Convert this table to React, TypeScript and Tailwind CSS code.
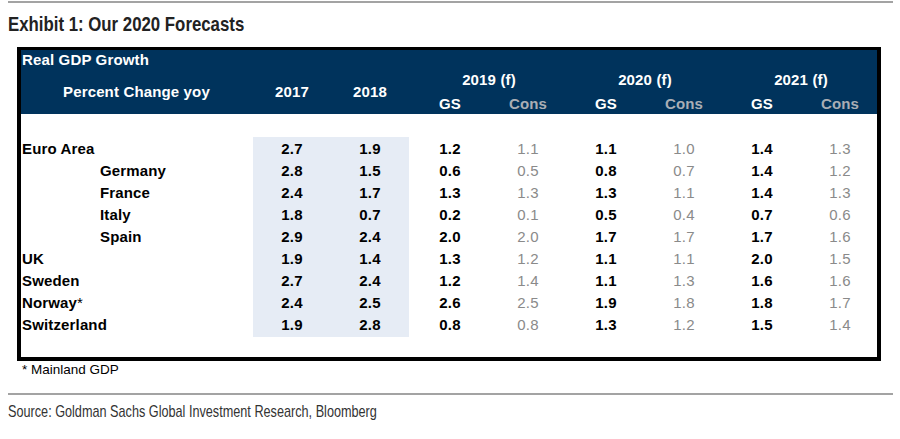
import type { ReactNode } from "react";

interface Row {
  label: string;
  sub?: boolean;
  note?: boolean;
  hist: [string, string];
  fc: [string, string, string, string, string, string];
}

const ROWS: Row[] = [
  { label: "Euro Area", hist: ["2.7", "1.9"], fc: ["1.2", "1.1", "1.1", "1.0", "1.4", "1.3"] },
  { label: "Germany", sub: true, hist: ["2.8", "1.5"], fc: ["0.6", "0.5", "0.8", "0.7", "1.4", "1.2"] },
  { label: "France", sub: true, hist: ["2.4", "1.7"], fc: ["1.3", "1.3", "1.3", "1.1", "1.4", "1.3"] },
  { label: "Italy", sub: true, hist: ["1.8", "0.7"], fc: ["0.2", "0.1", "0.5", "0.4", "0.7", "0.6"] },
  { label: "Spain", sub: true, hist: ["2.9", "2.4"], fc: ["2.0", "2.0", "1.7", "1.7", "1.7", "1.6"] },
  { label: "UK", hist: ["1.9", "1.4"], fc: ["1.3", "1.2", "1.1", "1.1", "2.0", "1.5"] },
  { label: "Sweden", hist: ["2.7", "2.4"], fc: ["1.2", "1.4", "1.1", "1.3", "1.6", "1.6"] },
  { label: "Norway", note: true, hist: ["2.4", "2.5"], fc: ["2.6", "2.5", "1.9", "1.8", "1.8", "1.7"] },
  { label: "Switzerland", hist: ["1.9", "2.8"], fc: ["0.8", "0.8", "1.3", "1.2", "1.5", "1.4"] },
];

const YEARS = ["2019 (f)", "2020 (f)", "2021 (f)"];

function TableHeader(): ReactNode {
  return (
    <div className="bg-[#00335c] text-white font-bold">
      <div className="h-[20px] leading-[20px] pl-px">Real GDP Growth</div>
      <div className="grid grid-cols-[232px_78px_78px_repeat(6,78px)] grid-rows-[22px_22px]">
        <div className="row-span-2 flex items-center pt-px pl-[42px]">Percent Change yoy</div>
        <div className="row-span-2 flex items-center justify-center pt-px">2017</div>
        <div className="row-span-2 flex items-center justify-center pt-px">2018</div>
        {YEARS.map((y) => (
          <div key={y} className="col-span-2 flex items-center justify-center pb-px pl-1">
            {y}
          </div>
        ))}
        {YEARS.map((y) => [
          <div key={y + "gs"} className="flex items-center justify-center pt-[2px] pl-1">
            GS
          </div>,
          <div key={y + "cons"} className="flex items-center justify-center pt-[2px] pl-1 text-[#a9aeb5]">
            Cons
          </div>,
        ])}
      </div>
    </div>
  );
}

function DataRow({ row }: { row: Row }): ReactNode {
  return (
    <div className="grid grid-cols-[232px_78px_78px_repeat(6,78px)] h-[22px] items-stretch">
      <div className={`flex items-center pt-px font-bold ${row.sub ? "pl-[79px]" : "pl-px"}`}>
        {row.label}
        {row.note && <span className="font-normal">*</span>}
      </div>
      {row.hist.map((v, i) => (
        <div key={i} className="flex items-center justify-center pt-px bg-[#e6ecf5] font-bold">
          {v}
        </div>
      ))}
      {row.fc.map((v, i) => (
        <div
          key={i}
          className={`flex items-center justify-center pt-px pl-1 ${
            i % 2 === 0 ? "font-bold text-black" : "text-[#8a8a8a]"
          }`}
        >
          {v}
        </div>
      ))}
    </div>
  );
}

export default function App(): ReactNode {
  return (
    <div className="w-[900px] h-[439px] bg-white pl-[8px] pt-px">
      <div className="w-[885px] h-[2px] bg-[#a3a3a3]" />
      <div className="h-[24px] mt-[9px] leading-[24px]">
        <span
          className="inline-block origin-left scale-x-[0.8] text-[21px] font-bold text-[#222222] whitespace-nowrap"
          style={{ fontFamily: '"Liberation Sans", Arial, sans-serif' }}
        >
          Exhibit 1: Our 2020 Forecasts
        </span>
      </div>

      <div
        className="mt-[11px] ml-[9px] w-[864px] border-t-[3px] border-l-4 border-r-4 border-b-4 border-black text-[15px] tracking-[0.15px] text-black"
        style={{ fontFamily: '"Liberation Sans", Arial, sans-serif' }}
      >
        <TableHeader />
        <div className="pt-[23px] pb-[22px]">
          {ROWS.map((r) => (
            <DataRow key={r.label} row={r} />
          ))}
        </div>
      </div>

      <div
        className="mt-px ml-[14px] h-[16px] leading-[16px] text-[13.5px] text-black"
        style={{ fontFamily: '"Liberation Sans", Arial, sans-serif' }}
      >
        * Mainland GDP
      </div>

      <div className="mt-[15px] w-[885px] h-[2px] bg-[#a3a3a3]" />

      <div className="mt-[5px] h-[22px] leading-[22px]">
        <span
          className="inline-block origin-left scale-x-[0.745] text-[17px] text-[#333333] whitespace-nowrap"
          style={{ fontFamily: '"Liberation Sans", Arial, sans-serif' }}
        >
          Source: Goldman Sachs Global Investment Research, Bloomberg
        </span>
      </div>
    </div>
  );
}
